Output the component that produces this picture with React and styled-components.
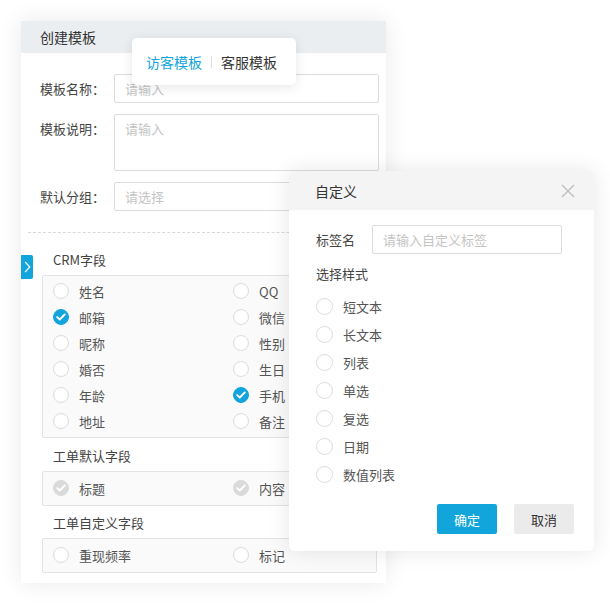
import React from "react";
import styled, { createGlobalStyle } from "styled-components";

const Global = createGlobalStyle`
  html, body { margin: 0; padding: 0; background: #fff; }
  body { font-family: "Noto Sans CJK SC", "Noto Sans", sans-serif; color: #444; }
  * { box-sizing: border-box; }
`;

const BLUE = "#12a5dc";

const Stage = styled.div`
  position: relative;
  width: 610px;
  height: 604px;
  padding: 21px 0 0 21px;
`;

const Panel = styled.div`
  position: relative;
  width: 365px;
  height: 562px;
  background: #fff;
  box-shadow: 0 0 22px rgba(0, 0, 0, 0.09);
  display: flex;
  flex-direction: column;
`;

const PanelHeader = styled.div`
  height: 34px;
  background: #ebeef1;
  padding-left: 19px;
  display: flex;
  align-items: center;
  font-size: 14px;
  color: #333;
`;

const Form = styled.div`
  padding: 21px 7px 0 19px;
  display: flex;
  flex-direction: column;
  gap: 11px;
`;

const FormRow = styled.div`
  display: flex;
  align-items: ${(p) => (p.$top ? "flex-start" : "center")};
`;

const Label = styled.div`
  width: ${(p) => p.$w || 74}px;
  font-size: 13px;
  color: #444;
  line-height: 20px;
  padding-top: ${(p) => (p.$top ? 5 : 0)}px;
  flex-shrink: 0;
`;

const Field = styled.div`
  width: ${(p) => p.$w || 265}px;
  height: ${(p) => p.$h || 29}px;
  border: 1px solid #dcdcdc;
  border-radius: 2px;
  padding: ${(p) => (p.$multi ? "5px 10px" : "0 10px")};
  display: flex;
  align-items: ${(p) => (p.$multi ? "flex-start" : "center")};
  font-size: 13px;
  line-height: 18px;
  color: #c4c4c4;
  background: #fff;
`;

const Dashed = styled.div`
  margin: 21px 7px 0 7px;
  border-top: 1px dashed #d9d9d9;
`;

const Fields = styled.div`
  padding: 17px 9px 10px 21px;
  display: flex;
  flex-direction: column;
`;

const SectionTitle = styled.div`
  padding-left: 11px;
  line-height: 20px;
  font-size: 13px;
  color: #444;
  margin-top: ${(p) => p.$mt || 0}px;
  margin-bottom: 5px;
`;

const OptionBox = styled.div`
  border: 1px solid #e3e3e3;
  border-radius: 2px;
  background: #fafafa;
  padding: ${(p) => (p.$single ? "3px 0 4px 10px" : "2px 0 3px 10px")};
  display: grid;
  grid-template-columns: 180px 1fr;
`;

const Option = styled.div`
  height: ${(p) => p.$h || 26}px;
  display: flex;
  align-items: center;
  gap: 10px;
  font-size: 13px;
  color: #555;
`;

const Circle = styled.span`
  width: ${(p) => p.$size || 16}px;
  height: ${(p) => p.$size || 16}px;
  border-radius: 50%;
  flex-shrink: 0;
  display: flex;
  align-items: center;
  justify-content: center;
  border: 1px solid ${(p) => (p.$state === "on" ? BLUE : p.$state === "dis" ? "#dadada" : "#dcdcdc")};
  background: ${(p) => (p.$state === "on" ? BLUE : p.$state === "dis" ? "#dadada" : "#fff")};
`;

const SideTab = styled.div`
  position: absolute;
  left: 0;
  top: 234px;
  width: 12px;
  height: 24px;
  background: ${BLUE};
  border-radius: 0 2px 2px 0;
  display: flex;
  align-items: center;
  justify-content: center;
`;

const TabPopup = styled.div`
  position: absolute;
  left: 132px;
  top: 38px;
  width: 164px;
  height: 47px;
  background: #fff;
  border-radius: 5px;
  box-shadow: 0 2px 12px rgba(0, 0, 0, 0.1);
  display: flex;
  align-items: center;
  padding-left: 14px;
  font-size: 14px;
`;

const TabItem = styled.span`
  color: ${(p) => (p.$active ? BLUE : "#333")};
`;

const TabSep = styled.span`
  width: 1px;
  height: 12px;
  background: #dcdcdc;
  margin: 0 9px;
`;

const Dialog = styled.div`
  position: absolute;
  left: 289px;
  top: 171px;
  width: 305px;
  height: 380px;
  background: #fff;
  border-radius: 6px;
  overflow: hidden;
  box-shadow: 0 0 22px rgba(0, 0, 0, 0.1);
  display: flex;
  flex-direction: column;
`;

const DialogHeader = styled.div`
  height: 39px;
  background: #f4f4f4;
  padding: 0 19px 0 26px;
  display: flex;
  align-items: center;
  justify-content: space-between;
  font-size: 14px;
  color: #333;
`;

const DialogBody = styled.div`
  padding: 15px 20px 17px 27px;
  display: flex;
  flex-direction: column;
  flex: 1;
`;

const StyleTitle = styled.div`
  margin-top: 10px;
  line-height: 20px;
  font-size: 13px;
  color: #444;
  margin-bottom: 8px;
`;

const Footer = styled.div`
  margin-top: auto;
  display: flex;
  justify-content: flex-end;
  gap: 17px;
`;

const Button = styled.button`
  width: 60px;
  height: 30px;
  border: none;
  border-radius: 2px;
  font-family: inherit;
  font-size: 13px;
  background: ${(p) => (p.$primary ? BLUE : "#ebebeb")};
  color: ${(p) => (p.$primary ? "#fff" : "#333")};
`;

const Check = ({ color = "#fff" }) => (
  <svg width="10" height="8" viewBox="0 0 10 8">
    <path d="M1.2 4.1 L3.8 6.5 L8.8 1.4" fill="none" stroke={color} strokeWidth="1.9" strokeLinecap="round" strokeLinejoin="round" />
  </svg>
);

const Radio = ({ state, size }) => (
  <Circle $state={state} $size={size}>
    {state === "on" || state === "dis" ? <Check /> : null}
  </Circle>
);

const crm = [
  ["姓名", "off"], ["QQ", "off"],
  ["邮箱", "on"], ["微信", "off"],
  ["昵称", "off"], ["性别", "off"],
  ["婚否", "off"], ["生日", "off"],
  ["年龄", "off"], ["手机", "on"],
  ["地址", "off"], ["备注", "off"],
];

const styles = ["短文本", "长文本", "列表", "单选", "复选", "日期", "数值列表"];

export default function App() {
  return (
    <Stage>
      <Global />
      <Panel>
        <PanelHeader>创建模板</PanelHeader>
        <Form>
          <FormRow>
            <Label>模板名称：</Label>
            <Field>请输入</Field>
          </FormRow>
          <FormRow $top>
            <Label $top>模板说明：</Label>
            <Field $h={57} $multi>请输入</Field>
          </FormRow>
          <FormRow>
            <Label>默认分组：</Label>
            <Field>请选择</Field>
          </FormRow>
        </Form>
        <Dashed />
        <Fields>
          <SectionTitle>CRM字段</SectionTitle>
          <OptionBox>
            {crm.map(([t, s]) => (
              <Option key={t}>
                <Radio state={s} />
                {t}
              </Option>
            ))}
          </OptionBox>
          <SectionTitle $mt={8}>工单默认字段</SectionTitle>
          <OptionBox $single>
            <Option>
              <Radio state="dis" />
              标题
            </Option>
            <Option>
              <Radio state="dis" />
              内容
            </Option>
          </OptionBox>
          <SectionTitle $mt={7}>工单自定义字段</SectionTitle>
          <OptionBox $single>
            <Option>
              <Radio state="off" />
              重现频率
            </Option>
            <Option>
              <Radio state="off" />
              标记
            </Option>
          </OptionBox>
        </Fields>
        <SideTab>
          <svg width="7" height="12" viewBox="0 0 7 12">
            <path d="M1.2 1 L5.8 6 L1.2 11" fill="none" stroke="#fff" strokeWidth="1.2" />
          </svg>
        </SideTab>
      </Panel>

      <TabPopup>
        <TabItem $active>访客模板</TabItem>
        <TabSep />
        <TabItem>客服模板</TabItem>
      </TabPopup>

      <Dialog>
        <DialogHeader>
          自定义
          <svg width="14" height="14" viewBox="0 0 14 14">
            <path d="M1 1 L13 13 M13 1 L1 13" stroke="#bcbcbc" strokeWidth="1.2" fill="none" />
          </svg>
        </DialogHeader>
        <DialogBody>
          <FormRow>
            <Label $w={56}>标签名</Label>
            <Field $w={190}>请输入自定义标签</Field>
          </FormRow>
          <StyleTitle>选择样式</StyleTitle>
          {styles.map((s) => (
            <Option key={s} $h={28}>
              <Radio state="off" size={17} />
              {s}
            </Option>
          ))}
          <Footer>
            <Button $primary>确定</Button>
            <Button>取消</Button>
          </Footer>
        </DialogBody>
      </Dialog>
    </Stage>
  );
}
